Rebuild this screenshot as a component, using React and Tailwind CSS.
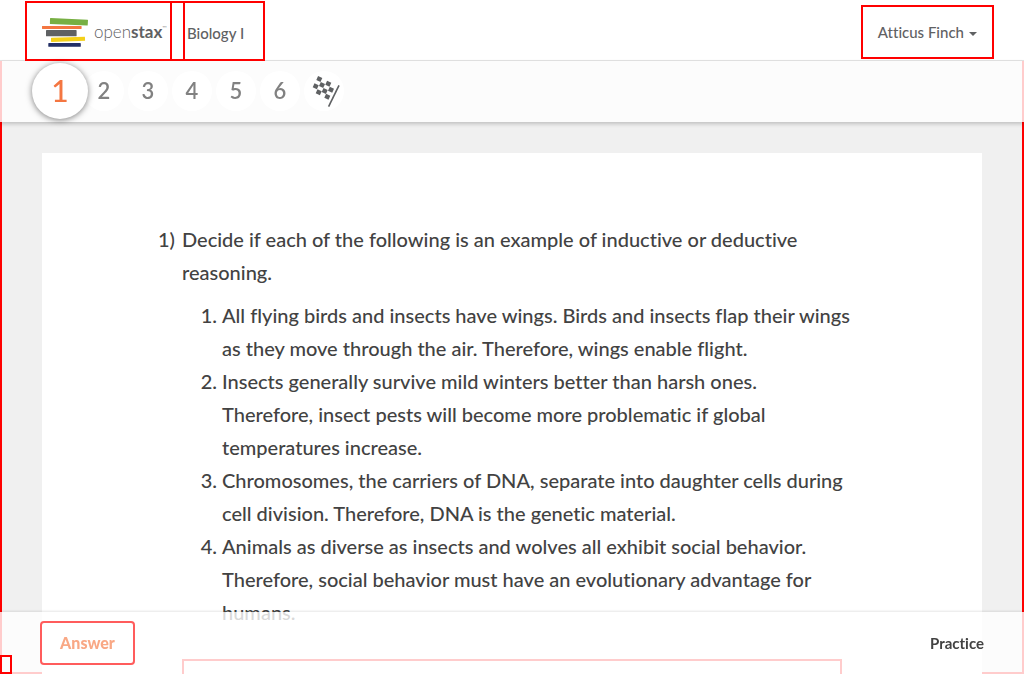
const STEPS = ["1", "2", "3", "4", "5", "6"];

const STATEMENTS = [
  "All flying birds and insects have wings. Birds and insects flap their wings as they move through the air. Therefore, wings enable flight.",
  "Insects generally survive mild winters better than harsh ones. Therefore, insect pests will become more problematic if global temperatures increase.",
  "Chromosomes, the carriers of DNA, separate into daughter cells during cell division. Therefore, DNA is the genetic material.",
  "Animals as diverse as insects and wolves all exhibit social behavior. Therefore, social behavior must have an evolutionary advantage for humans.",
];

function BooksLogo() {
  return (
    <svg viewBox="0 0 46 32" className="h-8 w-[46px] shrink-0" aria-hidden="true">
      <g transform="translate(0 2.8)">
        <path d="M8.6 0.2 L45.6 2 Q46 2 46 2.5 L45.7 7.4 Q45.6 7.9 45.1 7.8 L8.3 6.3 Q7.8 6.2 7.9 5.7 L8 0.7 Q8.1 0.2 8.6 0.2Z" fill="#77af43" />
        <rect x="0" y="8.1" width="39.6" height="3" rx="0.4" fill="#f47641" />
        <rect x="4" y="12.3" width="30.6" height="6.2" rx="0.6" fill="#5f6163" />
        <path d="M9.4 20 L42.9 18.9 L43.1 23 L9.6 24.1 Q9 24.1 9 23.5 L9 20.4 Q9 20 9.4 20Z" fill="#f4d019" />
        <rect x="6.3" y="25.3" width="32.5" height="3.7" rx="0.6" fill="#232f66" />
      </g>
    </svg>
  );
}

function FlagIcon() {
  const squares = [
    [7.3, 4], [16.3, 8.7], [3.7, 11.3], [10, 10], [19, 14.7], [6.7, 17.3], [12.7, 16], [15.3, 21.7],
  ];
  return (
    <svg viewBox="0 0 28 34" className="h-[34px] w-[28px]" aria-hidden="true">
      {squares.map(([x, y]) => (
        <rect key={`${x}-${y}`} x={x - 2.3} y={y - 2.2} width="4.6" height="4.4" fill="#5f6163" transform={`rotate(24 ${x} ${y})`} />
      ))}
      <path d="M27 10.3 L16.6 31.7" stroke="#5f6163" strokeWidth="1.6" />
    </svg>
  );
}

function Header() {
  return (
    <header className="flex h-[61px] items-start justify-between border-b border-[#e4e4e4] bg-white pr-[30px] pl-[25px]">
      <div className="mt-px -mb-px flex h-[60px]">
        <a href="#home" className="flex w-40 items-center gap-[6px] border-2 border-[#ff0000] pl-[15px]">
          <BooksLogo />
          <span className="flex items-start pt-0.5 text-[17px] leading-5 font-light text-[#5f6163]">
            open<span className="font-bold">stax</span>
            <span className="pt-[3px] text-[6px] leading-[6px]">™</span>
          </span>
        </a>
        <a href="#course" className="-ml-[15px] flex w-[95px] items-center border-2 border-[#ff0000] pt-1 pl-[15px] text-[15px] text-[#5f6163]">
          Biology I
        </a>
      </div>
      <button type="button" className="mt-[5px] flex h-[54px] items-center gap-[5px] border-2 border-[#ff0000] px-[15px] text-[15px] text-[#5f6163]">
        Atticus Finch
        <svg viewBox="0 0 8 4" className="mt-[3px] h-1 w-2" aria-hidden="true">
          <path d="M0 0H8L4 4Z" fill="#5f6163" />
        </svg>
      </button>
    </header>
  );
}

function StepNav() {
  return (
    <nav aria-label="Steps" className="flex h-[61px] items-center bg-white/80 pb-0.5 pl-8 shadow-[0_2px_4px_rgba(0,0,0,0.2)]">
      {STEPS.map((step, i) =>
        i === 0 ? (
          <button key={step} type="button" aria-current="step" className="relative -mr-1 size-14 rounded-full bg-white text-[30px] text-[#f47641] shadow-[0_1px_6px_rgba(0,0,0,0.5)]">
            {step}
          </button>
        ) : (
          <button key={step} type="button" className="mr-1 size-10 rounded-full bg-white text-[22px] font-semibold text-[#818181]">
            {step}
          </button>
        )
      )}
      <button type="button" aria-label="Finish" className="flex size-10 items-center justify-center rounded-full bg-white pt-0.5 pl-1">
        <FlagIcon />
      </button>
    </nav>
  );
}

export default function App() {
  return (
    <div className="relative h-screen overflow-hidden bg-[#f0f0f0] font-[Lato,sans-serif] font-medium text-[#424242] [font-variant-ligatures:none]">
      <main className="h-full border-2 border-[#ff0000] px-10 pt-[151px]">
        <article className="bg-white px-[140px] pt-[70px] pb-20 text-[20px] leading-[33px]">
          <ol className="list-none">
            <li className="relative">
              <span className="absolute right-full mr-[7px]">1)</span>
              <p>Decide if each of the following is an example of inductive or deductive reasoning.</p>
              <ol className="mt-[10px] -mr-[9px] list-decimal pl-10">
                {STATEMENTS.map((text) => (
                  <li key={text}>{text}</li>
                ))}
              </ol>
            </li>
          </ol>
          <textarea aria-label="Your answer" className="mt-[30px] block h-40 w-full resize-none border-2 border-[#ff0000] p-2" />
        </article>
      </main>

      <div className="fixed inset-x-0 top-0">
        <Header />
        <StepNav />
      </div>

      <footer className="fixed inset-x-0 bottom-0 flex h-[62px] items-center justify-between bg-white/80 px-10 text-[15px] font-bold shadow-[0_-1px_2px_rgba(0,0,0,0.1)]">
        <button type="button" className="h-11 w-[95px] rounded-[4px] border-2 border-[#ff5c5c] text-[16px] font-black text-[#f9a885]">
          Answer
        </button>
        <span>Practice</span>
        <span className="absolute bottom-0 left-0 h-[19px] w-3 border-2 border-[#ff0000]" />
      </footer>
    </div>
  );
}
